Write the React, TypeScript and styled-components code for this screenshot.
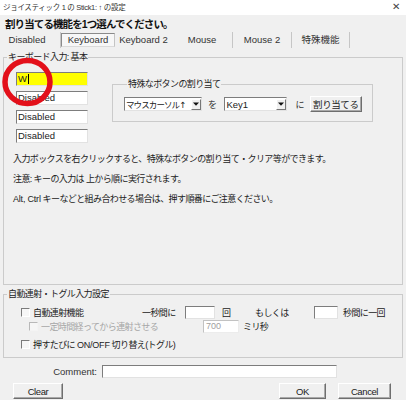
import React from "react";
import styled, { createGlobalStyle } from "styled-components";

const FONT = `"Liberation Sans", "Noto Sans CJK JP", sans-serif`;

const Global = createGlobalStyle`
  html, body { margin: 0; padding: 0; background: #f0f0f0; }
  body { font-family: ${FONT}; color: #1e1e1e; }
  * { box-sizing: border-box; }
`;

const Window = styled.div`
  position: relative;
  width: 406px;
  height: 400px;
  background: #f0f0f0;
  display: flex;
  flex-direction: column;
  overflow: hidden;
  font-size: 9px;
`;

const TitleBar = styled.div`
  height: 15px;
  background: #ffffff;
  display: flex;
  align-items: center;
  justify-content: space-between;
  padding: 0 6px 2px 3px;
  font-size: 7.5px;
  letter-spacing: -0.3px;
  color: #333;
`;

const Close = styled.span`
  font-family: "DejaVu Sans", sans-serif;
  font-size: 10px;
  color: #444;
`;

const Heading = styled.div`
  margin: 2px 0 0 5px;
  height: 14px;
  line-height: 14px;
  font-weight: bold;
  font-size: 10.5px;
  letter-spacing: -0.9px;
  color: #111;
`;

const Tabs = styled.div`
  display: flex;
  align-items: center;
  height: 15px;
  margin-top: 1px;
  padding-left: 4px;
  font-size: 9.5px;
`;

const Tab = styled.div<{ $w: number; $active?: boolean }>`
  width: ${(p) => p.$w}px;
  height: 14px;
  line-height: 12px;
  text-align: center;
  white-space: nowrap;
  color: #333;
  border: 1px solid ${(p) => (p.$active ? "#8a8a8a" : "transparent")};
  border-right-color: ${(p) => (p.$active ? "#c4c4c4" : "transparent")};
  border-bottom-color: ${(p) => (p.$active ? "#dadada" : "transparent")};
  background: ${(p) => (p.$active ? "#f7f7f7" : "transparent")};
`;

const TabSep = styled.div<{ $ml?: number }>`
  width: 1px;
  height: 16px;
  margin-left: ${(p) => p.$ml ?? 0}px;
  background: #c6c6c6;
`;

const Group = styled.fieldset<{ $h: number; $mt: number }>`
  margin: ${(p) => p.$mt}px 3px 0 3px;
  padding: 0;
  border: 1px solid #cbcbcb;
  height: ${(p) => p.$h}px;
  min-width: 0;
`;

const Legend = styled.legend`
  margin-left: 3px;
  padding: 0 1px;
  height: 12px;
  line-height: 12px;
  font-size: 9px;
  letter-spacing: -0.6px;
  color: #222;
`;

const TopRow = styled.div`
  display: flex;
  align-items: flex-start;
  margin-top: 9px;
`;

const KeyColumn = styled.div`
  position: relative;
  margin-left: 12px;
  display: flex;
  flex-direction: column;
  gap: 5px;
`;

const sunken = `
  border: 1px solid;
  border-color: #7d7d7d #e2e2e2 #e2e2e2 #7d7d7d;
`;

const KeyBox = styled.div<{ $yellow?: boolean }>`
  width: 72px;
  height: 14px;
  ${sunken}
  background: ${(p) => (p.$yellow ? "#ffff00" : "#ffffff")};
  font-size: 9.5px;
  line-height: 12px;
  padding-left: 1px;
  display: flex;
  align-items: center;
  color: #222;
`;

const Caret = styled.span`
  width: 1px;
  height: 10px;
  background: #000;
  margin-left: 1px;
`;

const Marker = styled.svg`
  position: absolute;
  left: -15px;
  top: -15px;
  pointer-events: none;
`;

const SpecialGroup = styled.fieldset`
  margin: 6px 0 0 24px;
  padding: 0 0 0 11px;
  width: 261px;
  height: 44px;
  border: 1px solid #cbcbcb;
  min-width: 0;
`;

const AssignRow = styled.div`
  display: flex;
  align-items: center;
  margin-top: 6px;
  height: 16px;
  font-size: 9px;
`;

const Select = styled.div<{ $w: number }>`
  width: ${(p) => p.$w}px;
  height: 14px;
  ${sunken}
  background: #fff;
  display: flex;
  align-items: center;
  justify-content: space-between;
  padding-left: 1px;
  font-size: 8.5px;
  letter-spacing: -0.9px;
  white-space: nowrap;
  overflow: hidden;
  color: #222;
`;

const SelectLatin = styled.span`
  font-size: 9.5px;
  letter-spacing: 0;
`;

const Arrow = styled.span`
  font-family: "DejaVu Sans", sans-serif;
  font-size: 8.5px;
  letter-spacing: 0;
`;

const ArrowBtn = styled.span`
  flex: none;
  width: 10px;
  height: 11px;
  background: #f0f0f0;
  border: 1px solid;
  border-color: #fff #777 #777 #fff;
  display: flex;
  align-items: center;
  justify-content: center;
`;

const Joiner = styled.span<{ $ml: number; $mr: number }>`
  margin: 0 ${(p) => p.$mr}px 0 ${(p) => p.$ml}px;
  letter-spacing: -0.6px;
  color: #333;
`;

const raised = `
  border: 1px solid;
  border-color: #ffffff #6e6e6e #6e6e6e #ffffff;
  box-shadow: inset -1px -1px #a9a9a9;
  background: #f0f0f0;
`;

const Button = styled.div<{ $w: number; $ml?: number; $h?: number }>`
  width: ${(p) => p.$w}px;
  height: ${(p) => p.$h ?? 16}px;
  margin-left: ${(p) => p.$ml ?? 0}px;
  ${raised}
  display: flex;
  align-items: center;
  justify-content: center;
  font-size: 9.5px;
  letter-spacing: -0.4px;
  color: #222;
  white-space: nowrap;
`;

const Notes = styled.div`
  margin: 9px 0 0 9px;
  display: flex;
  flex-direction: column;
  gap: 6px;
`;

const Note = styled.div`
  height: 14px;
  line-height: 14px;
  font-size: 9px;
  letter-spacing: -0.6px;
  color: #222;
  white-space: nowrap;
`;

const Latin = styled.span`
  font-size: 9px;
  letter-spacing: -0.2px;
`;

const OptRow = styled.div<{ $pl: number; $mt: number }>`
  display: flex;
  align-items: center;
  height: 14px;
  margin-top: ${(p) => p.$mt}px;
  padding-left: ${(p) => p.$pl}px;
  font-size: 9px;
  letter-spacing: -0.6px;
  white-space: nowrap;
`;

const Check = styled.span<{ $disabled?: boolean }>`
  flex: none;
  width: 9px;
  height: 9px;
  border: 1px solid;
  border-color: ${(p) =>
    p.$disabled ? "#b8b8b8 #f4f4f4 #f4f4f4 #b8b8b8" : "#7b7b7b #ffffff #ffffff #7b7b7b"};
  background: #f6f6f6;
`;

const Cell = styled.span<{ $w?: number; $ml?: number; $disabled?: boolean }>`
  flex: none;
  ${(p) => (p.$w ? `width: ${p.$w}px;` : "")}
  margin-left: ${(p) => p.$ml ?? 0}px;
  color: ${(p) => (p.$disabled ? "#a6a6a6" : "#222")};
`;

const TextBox = styled.div<{ $w: number; $h?: number; $ml?: number; $disabled?: boolean }>`
  flex: none;
  width: ${(p) => p.$w}px;
  height: ${(p) => p.$h ?? 13}px;
  margin-left: ${(p) => p.$ml ?? 0}px;
  ${sunken}
  border-color: ${(p) =>
    p.$disabled ? "#c2c2c2 #ececec #ececec #c2c2c2" : "#7d7d7d #e2e2e2 #e2e2e2 #7d7d7d"};
  background: #fff;
  font-size: 9px;
  letter-spacing: 0;
  line-height: 11px;
  padding-left: 2px;
  color: #a0a0a0;
`;

const CommentRow = styled.div`
  display: flex;
  align-items: center;
  margin-top: 7px;
  height: 13px;
`;

const CommentLabel = styled.span`
  width: 97px;
  text-align: right;
  font-size: 9.5px;
  color: #333;
`;

const ButtonRow = styled.div`
  display: flex;
  align-items: center;
  margin-top: 5px;
  padding-right: 15px;
`;

const Spacer = styled.div`
  flex: 1;
`;

const DropArrow = () => (
  <svg width="6" height="4" viewBox="0 0 6 4">
    <path d="M0 0.5 H6 L3 3.8 Z" fill="#111" />
  </svg>
);

export default function App() {
  return (
    <Window>
      <Global />
      <TitleBar>
        <span>ジョイスティック 1 の Stick1: ↑ の設定</span>
        <Close>✕</Close>
      </TitleBar>
      <Heading>割り当てる機能を1つ選んでください。</Heading>
      <Tabs>
        <Tab $w={46}>Disabled</Tab>
        <TabSep $ml={10} />
        <Tab $w={54} $active>
          Keyboard
        </Tab>
        <Tab $w={57}>Keyboard 2</Tab>
        <Tab $w={60}>Mouse</Tab>
        <TabSep />
        <Tab $w={58}>Mouse 2</Tab>
        <TabSep />
        <Tab $w={57}>特殊機能</Tab>
        <TabSep />
      </Tabs>

      <Group $h={234} $mt={4}>
        <Legend>キーボード入力: 基本</Legend>
        <TopRow>
          <KeyColumn>
            <KeyBox $yellow>
              W<Caret />
            </KeyBox>
            <KeyBox>Disabled</KeyBox>
            <KeyBox>Disabled</KeyBox>
            <KeyBox>Disabled</KeyBox>
            <Marker width="54" height="50" viewBox="0 0 54 50">
              <ellipse cx="26.5" cy="25" rx="22.5" ry="21.5" fill="none" stroke="#e3101a" strokeWidth="5.5" />
            </Marker>
          </KeyColumn>
          <SpecialGroup>
            <Legend>特殊なボタンの割り当て</Legend>
            <AssignRow>
              <Select $w={78}>
                <span>
                  マウスカーソル<Arrow>↑</Arrow>
                </span>
                <ArrowBtn>
                  <DropArrow />
                </ArrowBtn>
              </Select>
              <Joiner $ml={6} $mr={8}>
                を
              </Joiner>
              <Select $w={63}>
                <SelectLatin>Key1</SelectLatin>
                <ArrowBtn>
                  <DropArrow />
                </ArrowBtn>
              </Select>
              <Joiner $ml={8} $mr={6}>
                に
              </Joiner>
              <Button $w={52} $h={16}>
                割り当てる
              </Button>
            </AssignRow>
          </SpecialGroup>
        </TopRow>
        <Notes>
          <Note>入力ボックスを右クリックすると、特殊なボタンの割り当て・クリア等ができます。</Note>
          <Note>注意: キーの入力は 上から順に実行されます。</Note>
          <Note>
            <Latin>Alt, Ctrl</Latin> キーなどと組み合わせる場合は、押す順番にご注意ください。
          </Note>
        </Notes>
      </Group>

      <Group $h={70} $mt={3}>
        <Legend>自動連射・トグル入力設定</Legend>
        <OptRow $pl={17} $mt={5}>
          <Check />
          <Cell $ml={3} $w={109}>
            自動連射機能
          </Cell>
          <Cell $w={43}>一秒間に</Cell>
          <TextBox $w={30} />
          <Cell $ml={7} $w={33}>
            回
          </Cell>
          <Cell $w={59}>もしくは</Cell>
          <TextBox $w={24} />
          <Cell $ml={5}>秒間に一回</Cell>
        </OptRow>
        <OptRow $pl={25} $mt={0}>
          <Check $disabled />
          <Cell $ml={3} $w={162} $disabled>
            一定時間経ってから連射させる
          </Cell>
          <TextBox $w={36} $disabled>
            700
          </TextBox>
          <Cell $ml={4}>ミリ秒</Cell>
        </OptRow>
        <OptRow $pl={17} $mt={4}>
          <Check />
          <Cell $ml={3}>
            押すたびに <Latin>ON/OFF</Latin> 切り替え(トグル)
          </Cell>
        </OptRow>
      </Group>

      <CommentRow>
        <CommentLabel>Comment:</CommentLabel>
        <TextBox $w={235} $ml={5} />
      </CommentRow>
      <ButtonRow>
        <Button $w={50} $ml={13}>
          Clear
        </Button>
        <Spacer />
        <Button $w={47}>OK</Button>
        <Button $w={53} $ml={12}>
          Cancel
        </Button>
      </ButtonRow>
    </Window>
  );
}
